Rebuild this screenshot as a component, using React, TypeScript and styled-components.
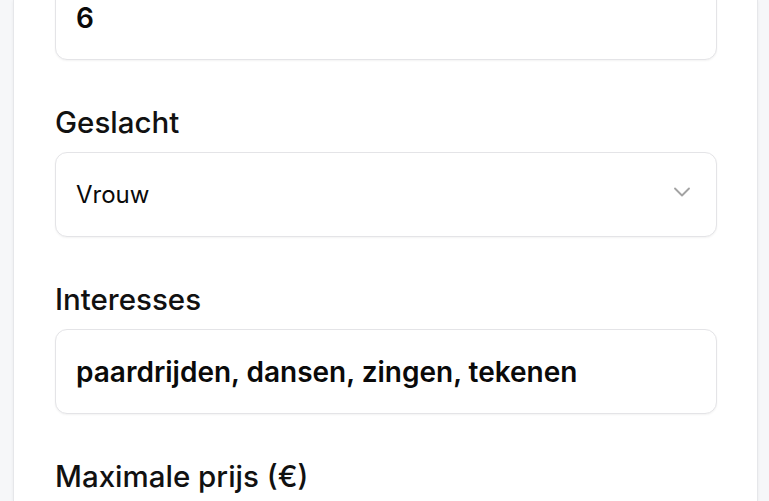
import React from "react";
import styled, { createGlobalStyle } from "styled-components";

const Global = createGlobalStyle`
  html, body { margin: 0; padding: 0; background: #f6f7f9; overflow: hidden; }
  body { font-family: Inter, "Noto Sans", sans-serif; -webkit-font-smoothing: antialiased; }
  * { box-sizing: border-box; }
`;

const Page = styled.div`
  height: 501px;
  padding: 0 11px 0 13px;
  background: #f6f7f9;
`;

const Card = styled.div`
  height: 100%;
  background: #fff;
  border-left: 1px solid #e6e7ea;
  border-right: 1px solid #e6e7ea;
  box-shadow: 0 1px 3px rgba(0, 0, 0, 0.06);
  padding: 0 40px 0 41px;
  overflow: hidden;
`;

const Form = styled.div`
  display: flex;
  flex-direction: column;
  gap: 41px;
  margin-top: -25px;
`;

const Field = styled.div`
  display: flex;
  flex-direction: column;
  gap: 9px;
`;

const Label = styled.label`
  font-size: 29.5px;
  line-height: 42px;
  font-weight: 500;
  color: #111;
`;

const Box = styled.div`
  height: 85px;
  border: 1px solid #e4e4e7;
  border-radius: 12px;
  box-shadow: 0 1px 2px rgba(0, 0, 0, 0.05);
  background: #fff;
  display: flex;
  align-items: center;
  justify-content: space-between;
  padding: 0 20px 0 20px;
`;

const Value = styled.span<{ $strong?: boolean }>`
  font-size: ${(p) => (p.$strong ? "28px" : "24px")};
  font-weight: ${(p) => (p.$strong ? 600 : 400)};
  color: #0a0a0a;
`;

const ChevronIcon = styled.svg`
  margin-bottom: 5px;
  flex: none;
`;

const Chevron = () => (
  <ChevronIcon width="28" height="28" viewBox="0 0 24 24" fill="none" stroke="#a3a3a3" strokeWidth="1.6" strokeLinecap="round" strokeLinejoin="round">
    <path d="m6 9 6 6 6-6" />
  </ChevronIcon>
);

export default function App() {
  return (
    <>
      <Global />
      <Page>
        <Card>
          <Form>
            <Field>
              <Box>
                <Value $strong>6</Value>
              </Box>
            </Field>
            <Field>
              <Label>Geslacht</Label>
              <Box>
                <Value>Vrouw</Value>
                <Chevron />
              </Box>
            </Field>
            <Field>
              <Label>Interesses</Label>
              <Box>
                <Value $strong>paardrijden, dansen, zingen, tekenen</Value>
              </Box>
            </Field>
            <Field>
              <Label>Maximale prijs (€)</Label>
            </Field>
          </Form>
        </Card>
      </Page>
    </>
  );
}
